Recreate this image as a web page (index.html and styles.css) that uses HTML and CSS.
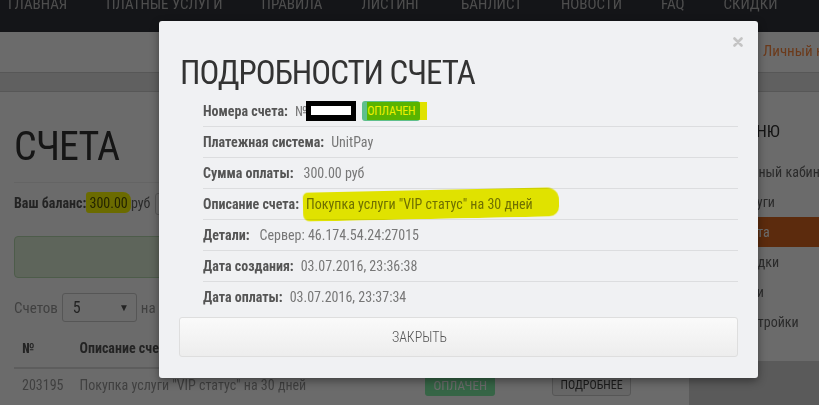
FILE: index.html
```html
<!DOCTYPE html>
<html lang="ru">
<head>
    <meta charset="UTF-8">
    <meta name="viewport" content="width=device-width, initial-scale=1.0">
    <title>Счета</title>
    <link rel="stylesheet" href="styles.css">
</head>
<body>
    <div class="topnav">
        <ul class="menu">
            <li>Главная</li>
            <li>Платные услуги</li>
            <li>Правила</li>
            <li>Листинг</li>
            <li>Банлист</li>
            <li>Новости</li>
            <li>FAQ</li>
            <li>Скидки</li>
        </ul>
    </div>

    <div class="header">
        <a class="cabinet-link" href="#">Личный кабинет</a>
    </div>
    <div class="subbar"></div>

    <div class="page">
        <div class="main">
            <h1>Счета</h1>

            <div class="balance">
                <b>Ваш баланс:</b> <span class="marker">300.00</span> руб
                <span class="btn-small">Пополнить</span>
            </div>

            <div class="alert-success"></div>

            <div class="per-page">
                Счетов
                <span class="select">5 <i>&#9660;</i></span>
                на странице
            </div>

            <table class="bills">
                <tr>
                    <th class="col-id">№</th>
                    <th class="col-desc">Описание счета</th>
                    <th class="col-status">Статус</th>
                    <th></th>
                </tr>
                <tr>
                    <td>203195</td>
                    <td>Покупка услуги "VIP статус" на 30 дней</td>
                    <td><span class="label-paid">Оплачен</span></td>
                    <td><span class="btn-more">Подробнее</span></td>
                </tr>
            </table>
        </div>

        <div class="sidebar">
            <h3>Меню</h3>
            <ul>
                <li>Личный кабинет</li>
                <li>Услуги</li>
                <li class="active">Счета</li>
                <li>Скидки</li>
                <li>Логи</li>
                <li>Настройки</li>
            </ul>
        </div>
    </div>

    <div class="backdrop"></div>

    <div class="modal">
        <span class="modal-close">
            <svg width="10" height="10" viewBox="0 0 10 10">
                <path d="M1.5 1.5 L8.5 8.5 M8.5 1.5 L1.5 8.5" stroke="#c4c4c4" stroke-width="2.6" stroke-linecap="round"/>
            </svg>
        </span>

        <h2>Подробности счета</h2>

        <div class="details">
            <div class="row">
                <span class="name">Номера счета:</span>
                <span class="value">№<span class="hidden-id"></span><span class="badge-paid">Оплачен</span></span>
            </div>
            <div class="row">
                <span class="name">Платежная система:</span>
                <span class="value">UnitPay</span>
            </div>
            <div class="row">
                <span class="name wide">Сумма оплаты:</span>
                <span class="value">300.00 руб</span>
            </div>
            <div class="row">
                <span class="name">Описание счета:</span>
                <span class="value"><span class="marker-line">Покупка услуги "VIP статус" на 30 дней</span></span>
            </div>
            <div class="row">
                <span class="name wide">Детали:</span>
                <span class="value">Сервер: 46.174.54.24:27015</span>
            </div>
            <div class="row">
                <span class="name">Дата создания:</span>
                <span class="value">03.07.2016, 23:36:38</span>
            </div>
            <div class="row">
                <span class="name">Дата оплаты:</span>
                <span class="value">03.07.2016, 23:37:34</span>
            </div>
        </div>

        <button class="btn-close">Закрыть</button>
    </div>
</body>
</html>
```

FILE: styles.css
```css
body {
    margin: 0;
    height: 405px;
    overflow: hidden;
    font-family: "Roboto Condensed", "Roboto", "Liberation Sans", sans-serif;
    font-stretch: 80%;
    background: #d6d6d6;
    color: #333;
}

/* top navigation */
.topnav {
    height: 32px;
    background: #303239;
    overflow: hidden;
}

.menu {
    display: flex;
    gap: 39px;
    margin: -6px 0 0;
    padding: 0 0 0 8px;
    list-style: none;
}

.menu li {
    font-size: 15px;
    line-height: 20px;
    text-transform: uppercase;
    color: #b8b8b8;
    white-space: nowrap;
}

.header {
    height: 40px;
    background: #fff;
    padding-left: 763px;
    overflow: hidden;
    white-space: nowrap;
}

.cabinet-link {
    font-size: 15px;
    line-height: 38px;
    color: #ff8a40;
    text-decoration: none;
}

.subbar {
    height: 18px;
    background: #e4e4e4;
    border-top: 1px solid #d0d0d0;
    border-bottom: 1px solid #d0d0d0;
}

/* page body */
.page {
    display: flex;
    align-items: flex-start;
    gap: 10px;
}

.main {
    flex: 0 0 689px;
    min-height: 330px;
    box-sizing: border-box;
    padding: 31px 14px 0;
    background: #fff;
}

.main h1 {
    margin: 0;
    padding-bottom: 11px;
    border-bottom: 1px solid #eee;
    font-size: 40px;
    line-height: 48px;
    font-weight: 400;
    letter-spacing: -0.8px;
    text-transform: uppercase;
    color: #333;
}

.balance {
    margin-top: 9px;
    font-size: 14px;
    line-height: 22px;
    color: #666;
    white-space: nowrap;
}

.balance b {
    color: #555;
}

.marker {
    position: relative;
    color: #555;
}

.marker::after {
    content: "";
    position: absolute;
    left: -4px;
    right: -3px;
    top: -3px;
    bottom: -2px;
    background: #ffff00;
    border-radius: 3px 8px 6px 3px;
    mix-blend-mode: multiply;
}

.btn-small {
    display: inline-block;
    margin-left: 1px;
    padding: 0 10px;
    border: 1px solid #ccc;
    border-radius: 3px;
    line-height: 20px;
    vertical-align: middle;
}

.alert-success {
    margin-top: 21px;
    height: 40px;
    border: 1px solid #b8dcb0;
    border-radius: 4px;
    background: #dff0d8;
}

.per-page {
    display: flex;
    align-items: center;
    gap: 4px;
    margin-top: 15px;
    font-size: 15px;
    color: #999;
}

.select {
    display: flex;
    justify-content: space-between;
    align-items: center;
    width: 75px;
    height: 29px;
    box-sizing: border-box;
    padding: 0 7px 0 10px;
    border: 1px solid #ccc;
    border-radius: 3px;
    font-size: 16px;
    color: #555;
}

.select i {
    font-style: normal;
    font-size: 10px;
    color: #555;
}

.bills {
    width: 100%;
    margin-top: 8px;
    border-collapse: collapse;
    font-size: 14px;
}

.bills th {
    padding: 8px;
    line-height: 21px;
    text-align: left;
    color: #555;
    border-bottom: 2px solid #ddd;
}

.bills td {
    padding: 5px 8px;
    line-height: 21px;
    color: #999;
}

.col-id { width: 41px; }
.col-desc { width: 330px; }
.col-status { width: 111px; }

.label-paid {
    display: inline-block;
    padding: 0 8px;
    border-radius: 3px;
    background: #80f0a8;
    color: #fff;
    font-size: 13px;
    line-height: 20px;
    text-transform: uppercase;
}

.btn-more {
    display: inline-block;
    padding: 0 7px;
    border: 1px solid #ccc;
    border-radius: 3px;
    background: #f4f4f4;
    color: #444;
    font-size: 12px;
    line-height: 20px;
    text-transform: uppercase;
}

/* right menu */
.sidebar {
    flex: 1;
    min-width: 0;
    height: 269px;
    box-sizing: border-box;
    padding: 27px 0 0;
    background: #fff;
}

.sidebar h3 {
    margin: 0 0 14px 36px;
    font-size: 17px;
    line-height: 24px;
    font-weight: 400;
    text-transform: uppercase;
}

.sidebar ul {
    margin: 0;
    padding: 0;
    list-style: none;
}

.sidebar li {
    height: 30px;
    padding-left: 37px;
    font-size: 14px;
    line-height: 30px;
    color: #666;
    white-space: nowrap;
    overflow: hidden;
}

.sidebar li.active {
    background: #db6621;
    color: #fff;
}

/* modal */
.backdrop {
    position: fixed;
    inset: 0;
    background: rgba(0, 0, 0, 0.58);
}

.modal {
    position: absolute;
    left: 159px;
    top: 21px;
    z-index: 10;
    width: 599px;
    box-sizing: border-box;
    padding: 20px 20px 21px;
    background: #f0f1f3;
    border-radius: 3px;
    box-shadow: 0 3px 9px rgba(0, 0, 0, 0.4);
}

.modal-close {
    position: absolute;
    top: 16px;
    right: 15px;
    line-height: 0;
}

.modal h2 {
    margin: 12px 0 3px 1px;
    font-size: 33px;
    line-height: 40px;
    font-weight: 400;
    letter-spacing: -1px;
    text-transform: uppercase;
    color: #333;
}

.details {
    margin-left: 24px;
}

.row {
    display: flex;
    align-items: center;
    height: 30px;
    border-bottom: 1px solid #dcdddf;
    font-size: 14px;
    white-space: nowrap;
}

.row:last-child {
    border-bottom: none;
}

.name {
    margin-right: 7px;
    font-weight: 700;
    color: #555;
}

.name.wide {
    margin-right: 10px;
}

.value {
    display: flex;
    align-items: center;
    color: #777;
}

.hidden-id {
    width: 40px;
    height: 9px;
    margin-left: -1px;
    border: 5px solid #000;
    border-bottom-width: 6px;
    background: #fff;
}

.badge-paid {
    position: relative;
    margin-left: 6px;
    padding: 0 5px;
    border-radius: 3px;
    background: #5fbf8c;
    color: #fff;
    font-size: 12px;
    line-height: 20px;
    letter-spacing: -0.2px;
    text-transform: uppercase;
}

.badge-paid::after {
    content: "";
    position: absolute;
    left: 5px;
    right: -7px;
    top: 1px;
    bottom: 1px;
    background: #eef000;
    mix-blend-mode: multiply;
}

.marker-line {
    position: relative;
}

.marker-line::after {
    content: "";
    position: absolute;
    left: -3px;
    right: -26px;
    top: -6px;
    bottom: -7px;
    background: #eef000;
    border-radius: 5px 12px 10px 7px;
    transform: rotate(-1.2deg);
    mix-blend-mode: multiply;
}

.btn-close {
    display: block;
    width: 100%;
    height: 40px;
    margin-top: 5px;
    padding: 0 78px 0 0;
    border: 1px solid #dedede;
    border-radius: 3px;
    background: linear-gradient(#fafafa, #ededed);
    font-family: inherit;
    font-stretch: inherit;
    font-size: 14px;
    font-weight: 300;
    text-transform: uppercase;
    color: #555;
}
```
